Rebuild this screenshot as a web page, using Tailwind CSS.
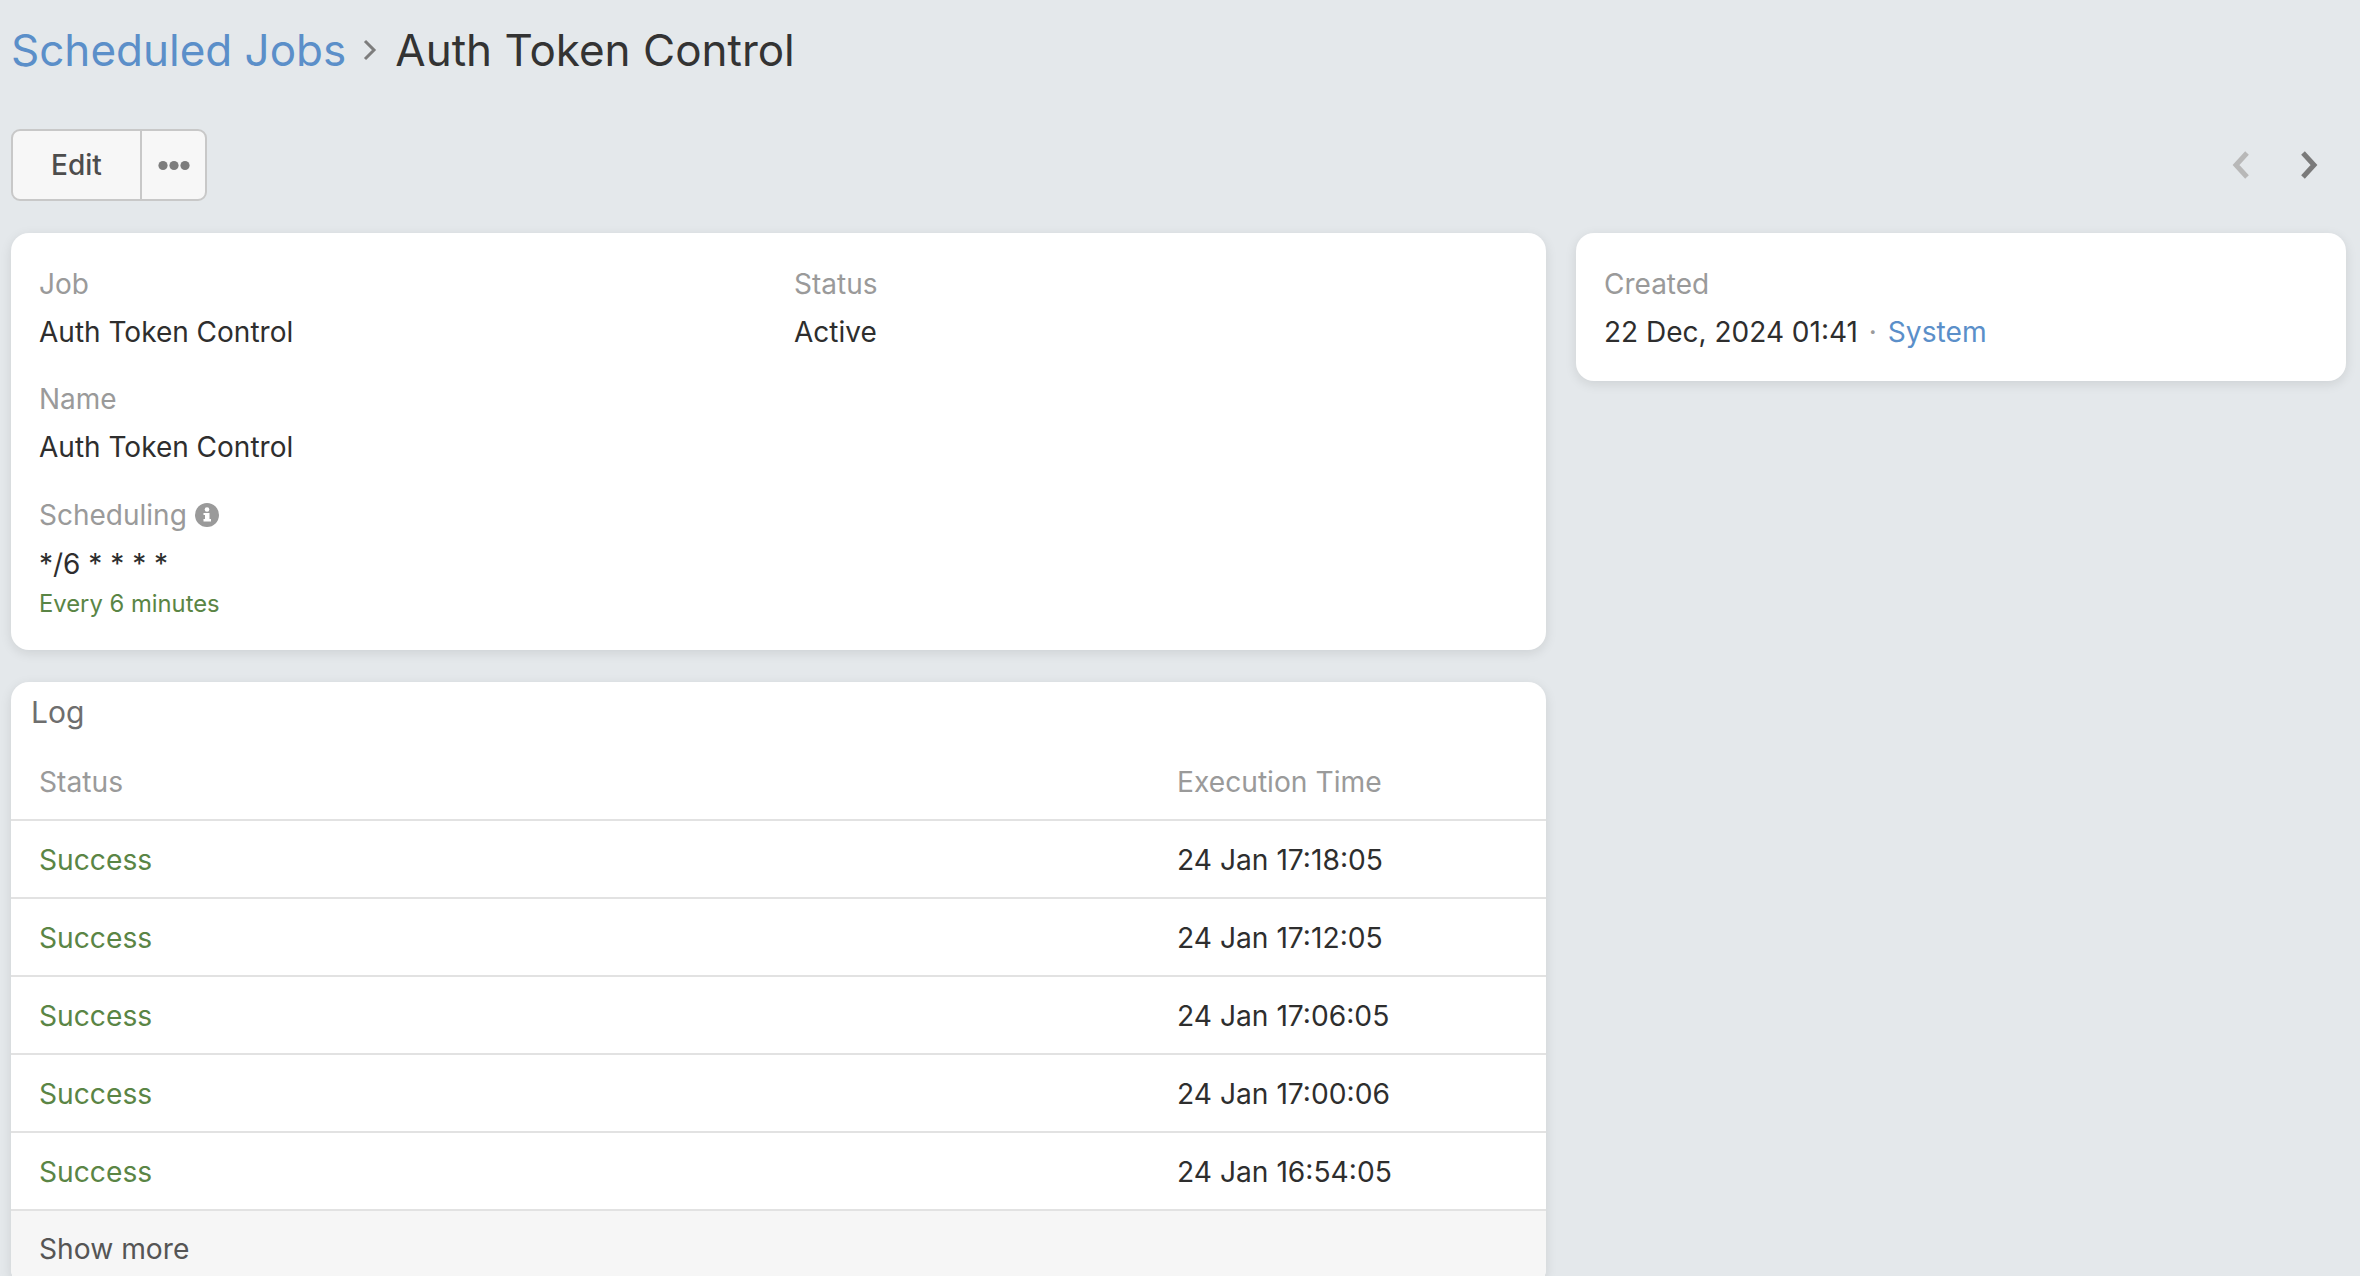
<!DOCTYPE html>
<html lang="en">
<head>
  <meta charset="UTF-8">
  <title>Auth Token Control</title>
  <script src="https://cdn.jsdelivr.net/npm/@tailwindcss/browser@4"></script>
</head>
<body class="h-[1276px] overflow-hidden bg-[#e4e8eb] font-['Inter',sans-serif] text-[28px] leading-[42px] text-[#2e2e2e]">
  <div class="px-[11px]">
    <!-- title -->
    <h1 class="flex h-[99px] items-center text-[44px] font-normal text-[#333]">
      <a class="text-[#5b8fc9]">Scheduled Jobs</a>
      <svg class="ml-[16px] mr-[17px] h-[30px] w-[16px] text-[#7d7d7d]" viewBox="0 0 16 30" fill="none" stroke="currentColor" stroke-width="3"><path d="M3 6l9 9-9 9"/></svg>
      <span>Auth Token Control</span>
    </h1>

    <!-- toolbar -->
    <div class="mt-[30px] flex h-[72px] items-center justify-between">
      <div class="flex h-[72px] rounded-[9px] border-2 border-[#c8c8c8] bg-[#f7f7f7]">
        <button class="w-[127px] font-medium text-[#4d4d4d]">Edit</button>
        <button class="flex w-[65px] items-center justify-center border-l-2 border-[#c8c8c8]">
          <svg class="h-[11px] w-[32px] fill-[#7d7d7d]" viewBox="0 0 32 11"><circle cx="5" cy="5.5" r="4.6"/><circle cx="16" cy="5.5" r="4.6"/><circle cx="27" cy="5.5" r="4.6"/></svg>
        </button>
      </div>
      <div class="flex items-center gap-[50px] pr-[31px]">
        <svg class="h-[28px] w-[18px] text-[#b8b8b8]" viewBox="0 0 18 28" fill="none" stroke="currentColor" stroke-width="5"><path d="M15 2L4 14l11 12"/></svg>
        <svg class="h-[28px] w-[18px] text-[#7a7a7a]" viewBox="0 0 18 28" fill="none" stroke="currentColor" stroke-width="5"><path d="M3 2l11 12L3 26"/></svg>
      </div>
    </div>

    <div class="mt-[32px] flex items-start gap-[30px] pr-[3px]">
      <div class="w-[1535px] shrink-0">
        <!-- job details -->
        <div class="h-[417px] rounded-[18px] bg-white px-[28px] pt-[30px] shadow-[0_3px_12px_rgba(0,0,0,0.1)]">
          <div class="grid grid-cols-[755px_1fr]">
            <div>
              <div class="text-[#9a9a9a]">Job</div>
              <div class="mt-[6px]">Auth Token Control</div>
            </div>
            <div>
              <div class="text-[#9a9a9a]">Status</div>
              <div class="mt-[6px]">Active</div>
            </div>
          </div>
          <div class="mt-[25px] text-[#9a9a9a]">Name</div>
          <div class="mt-[6px]">Auth Token Control</div>
          <div class="mt-[26px] flex items-center gap-[8px] text-[#9a9a9a]">
            Scheduling
            <svg class="h-[24px] w-[24px]" viewBox="0 0 24 24"><circle cx="12" cy="12" r="12" fill="#9a9a9a"/><rect x="10" y="10" width="4.5" height="8" fill="#fff"/><rect x="8.5" y="16" width="7.5" height="2.5" fill="#fff"/><rect x="8.5" y="10" width="4" height="2" fill="#fff"/><circle cx="12" cy="6.5" r="2.3" fill="#fff"/></svg>
          </div>
          <div class="mt-[7px]">*/6 * * * *</div>
          <div class="text-[23.8px] leading-[38px] text-[#5a8545]">Every 6 minutes</div>
        </div>

        <!-- log -->
        <div class="mt-[32px] overflow-hidden rounded-[18px] bg-white shadow-[0_3px_12px_rgba(0,0,0,0.1)]">
          <div class="flex h-[61px] items-center px-[20px] pb-[2px] text-[30px] text-[#6e6e6e]">Log</div>
          <div class="flex h-[78px] items-center border-b-2 border-[#e2e2e2] px-[28px] pt-[2px] text-[28.2px] text-[#9a9a9a]">
            <div class="w-[1138px]">Status</div><div>Execution Time</div>
          </div>
          <div class="flex h-[78px] items-center border-b-2 border-[#e2e2e2] px-[28px] pt-[2px] text-[28.2px]">
            <div class="w-[1138px] text-[#5a8545]">Success</div><div>24 Jan 17:18:05</div>
          </div>
          <div class="flex h-[78px] items-center border-b-2 border-[#e2e2e2] px-[28px] pt-[2px] text-[28.2px]">
            <div class="w-[1138px] text-[#5a8545]">Success</div><div>24 Jan 17:12:05</div>
          </div>
          <div class="flex h-[78px] items-center border-b-2 border-[#e2e2e2] px-[28px] pt-[2px] text-[28.2px]">
            <div class="w-[1138px] text-[#5a8545]">Success</div><div>24 Jan 17:06:05</div>
          </div>
          <div class="flex h-[78px] items-center border-b-2 border-[#e2e2e2] px-[28px] pt-[2px] text-[28.2px]">
            <div class="w-[1138px] text-[#5a8545]">Success</div><div>24 Jan 17:00:06</div>
          </div>
          <div class="flex h-[78px] items-center border-b-2 border-[#e2e2e2] px-[28px] pt-[2px] text-[28.2px]">
            <div class="w-[1138px] text-[#5a8545]">Success</div><div>24 Jan 16:54:05</div>
          </div>
          <div class="flex h-[76px] items-center bg-[#f6f6f6] px-[28px] text-[28.2px] text-[#555]">Show more</div>
        </div>
      </div>

      <!-- created -->
      <div class="h-[148px] w-[771px] rounded-[18px] bg-white px-[28px] pt-[30px] shadow-[0_3px_12px_rgba(0,0,0,0.1)]">
        <div class="text-[#9a9a9a]">Created</div>
        <div class="mt-[6px]">22 Dec, 2024 01:41 <span class="mx-[3px] text-[#9a9a9a]">·</span> <a class="text-[28.2px] text-[#5b8fc9]">System</a></div>
      </div>
    </div>
  </div>
</body>
</html>
